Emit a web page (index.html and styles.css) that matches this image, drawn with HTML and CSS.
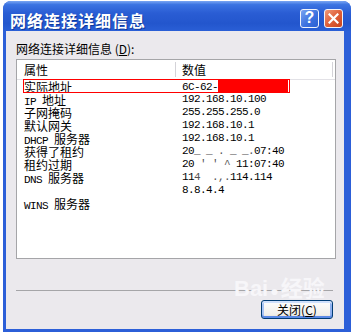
FILE: index.html
```html
<!DOCTYPE html>
<html lang="zh-CN">
<head>
  <meta charset="UTF-8">
  <title>网络连接详细信息</title>
  <link rel="stylesheet" href="styles.css">
</head>
<body>
  <div class="window">
    <div class="titlebar">
      <span class="title">网络连接详细信息</span>
      <div class="caption-buttons">
        <span class="cap-btn help">?</span>
        <span class="cap-btn close">
          <svg width="11" height="11" viewBox="0 0 11 11">
            <path d="M1.5 1.5 L9.5 9.5 M9.5 1.5 L1.5 9.5" stroke="#fff" stroke-width="2.2" stroke-linecap="square"/>
          </svg>
        </span>
      </div>
    </div>

    <div class="client">
      <div class="label">网络连接详细信息 (<u>D</u>):</div>

      <div class="listview">
        <div class="lv-header">
          <span class="col1">属性</span>
          <span class="col2">数值</span>
        </div>
        <div class="lv-row">
          <span class="col1">实际地址</span>
          <span class="col2 en">6C-62-<span class="redact"></span></span>
        </div>
        <div class="lv-row">
          <span class="col1"><span class="en">IP </span>地址</span>
          <span class="col2 en">192.168.10.100</span>
        </div>
        <div class="lv-row">
          <span class="col1">子网掩码</span>
          <span class="col2 en">255.255.255.0</span>
        </div>
        <div class="lv-row">
          <span class="col1">默认网关</span>
          <span class="col2 en">192.168.10.1</span>
        </div>
        <div class="lv-row">
          <span class="col1"><span class="en">DHCP </span>服务器</span>
          <span class="col2 en">192.168.10.1</span>
        </div>
        <div class="lv-row">
          <span class="col1">获得了租约</span>
          <span class="col2 en">20<span class="smudge">_ _ . _ _.</span>07:40</span>
        </div>
        <div class="lv-row">
          <span class="col1">租约过期</span>
          <span class="col2 en">20<span class="smudge"> ' ' ^ </span>11:07:40</span>
        </div>
        <div class="lv-row">
          <span class="col1"><span class="en">DNS </span>服务器</span>
          <span class="col2 en">11<span class="smudge">4  .,.</span>114.114</span>
        </div>
        <div class="lv-row">
          <span class="col1"></span>
          <span class="col2 en">8.8.4.4</span>
        </div>
        <div class="lv-row">
          <span class="col1"><span class="en">WINS </span>服务器</span>
          <span class="col2"></span>
        </div>
        <div class="mark"></div>
      </div>

      <div class="separator"></div>

      <div class="footer">
        <button class="btn">关闭(<u>C</u>)</button>
      </div>

      <div class="watermark">Bai<span class="paw">&#9679;</span>经验</div>
    </div>
  </div>
</body>
</html>
```

FILE: styles.css
```css
:root {
  --frame: #2c5fd8;
  --client: #ebe9ed;
  --text: #000;
  --line: #a5a5a8;
}

body {
  margin: 0;
  background: #fff;
  font-family: "Noto Sans CJK SC", "Liberation Sans", sans-serif;
  font-size: 12px;
  color: var(--text);
}

.window {
  margin: 1px 0 0 3px;
  width: 348px;
  height: 331px;
  background: var(--frame);
  border-radius: 8px 8px 0 0;
  display: flex;
  flex-direction: column;
}

.titlebar {
  height: 30px;
  box-sizing: border-box;
  padding: 4px 8px 0 7px;
  display: flex;
  align-items: center;
  justify-content: space-between;
  border-radius: 8px 8px 0 0;
  background: linear-gradient(#7aa6f2 0, #3c74e2 12%, #2a5dd4 40%, #2356cd 75%, #2a5fd6 100%);
}

.title {
  color: #fff;
  font-weight: bold;
  font-size: 16px;
  letter-spacing: 1px;
  line-height: 18px;
  margin-top: 3px;
  text-shadow: 1px 1px 0 #0f3a9c;
}

.caption-buttons {
  display: flex;
  gap: 5px;
}

.cap-btn {
  width: 19px;
  height: 19px;
  box-sizing: border-box;
  border: 1px solid #f2f4fb;
  border-radius: 3px;
  display: flex;
  align-items: center;
  justify-content: center;
}

.help {
  background: linear-gradient(135deg, #7aa3f0, #3d72e0 55%, #2c5fd3);
  color: #fff;
  font-family: "Liberation Sans", sans-serif;
  font-weight: bold;
  font-size: 16px;
}

.close {
  background: linear-gradient(135deg, #f09a78, #e0603a 50%, #c8431c);
}

.client {
  position: relative;
  flex: 1;
  margin: 0 7px 3px 3px;
  background: var(--client);
  padding: 11px 0 0 10px;
}

.label {
  line-height: 14px;
  height: 14px;
}

.listview {
  position: relative;
  margin-top: 3px;
  width: 320px;
  height: 200px;
  box-sizing: border-box;
  border: 1px solid var(--line);
  background: #fff;
}

.lv-header {
  display: flex;
  height: 20px;
  box-sizing: border-box;
  border-bottom: 1px solid #e2e1e6;
  line-height: 19px;
}

.lv-header .col1 {
  border-right: 1px solid #d4d3d8;
  margin: 2px 0;
  line-height: 15px;
}

.lv-header .col2 {
  border-right: 1px solid #d4d3d8;
  margin: 2px 0;
  line-height: 15px;
  width: 150px;
}

.col1 {
  width: 159px;
  box-sizing: border-box;
  padding-left: 7px;
  white-space: pre;
}

.col2 {
  padding-left: 6px;
  white-space: pre;
}

.lv-row {
  display: flex;
  height: 13px;
  line-height: 13px;
}

.en {
  font-family: "Liberation Mono", monospace;
  font-size: 11px;
  letter-spacing: -0.6px;
}

.redact {
  display: inline-block;
  width: 70px;
  height: 12px;
  vertical-align: -2px;
  background: #ff0000;
}

.smudge {
  color: #555;
}

.mark {
  position: absolute;
  left: 6px;
  top: 19px;
  width: 267px;
  height: 14px;
  box-sizing: border-box;
  border: 1px solid #ff0000;
}

.separator {
  margin-top: 31px;
  width: 317px;
  height: 1px;
  background: var(--line);
}

.footer {
  display: flex;
  justify-content: flex-end;
  width: 317px;
  margin-top: 9px;
}

.btn {
  width: 72px;
  height: 19px;
  padding: 0;
  font-family: "Noto Sans CJK SC", sans-serif;
  font-size: 12px;
  line-height: 15px;
  color: #000;
  border: 1px solid #003c74;
  border-radius: 3px;
  background: linear-gradient(#fefefe, #f0efea 80%, #dcd8cf);
  box-shadow: inset 0 -2px 0 #5b8ae6, inset 0 2px 0 #cfe0fb, inset 2px 0 0 #a9c4f4, inset -2px 0 0 #8eb0ee;
}

.watermark {
  position: absolute;
  left: 228px;
  top: 246px;
  color: #f7f6f9;
  font-family: "Liberation Sans", "Noto Sans CJK SC", sans-serif;
  font-size: 22px;
  font-weight: bold;
  line-height: 24px;
  pointer-events: none;
}

.paw {
  font-size: 14px;
  margin: 0 2px;
}
```
